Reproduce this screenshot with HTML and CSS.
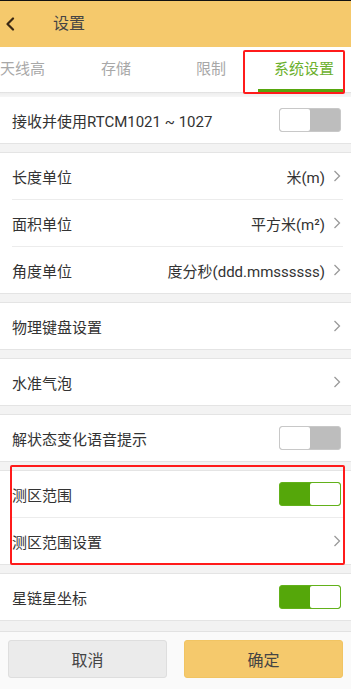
FILE: index.html
```html
<!DOCTYPE html>
<html lang="zh">
<head>
<meta charset="utf-8">
<link rel="stylesheet" href="styles.css">
</head>
<body>
<div class="page">
  <div class="topline"></div>
  <header class="header">
    <svg class="back" width="10" height="14" viewBox="0 0 10 14"><path d="M8 1.5 L2.5 7 L8 12.5" fill="none" stroke="#3a2814" stroke-width="2.2" stroke-linecap="round" stroke-linejoin="round"/></svg>
    <span class="title">设置</span>
  </header>
  <nav class="tabs">
    <span class="tab t1">天线高</span>
    <span class="tab t2">存储</span>
    <span class="tab t3">限制</span>
    <span class="tab t4 active">系统设置</span>
  </nav>
  <div class="shade"></div>
  <main class="content">
    <section class="group first">
      <div class="row"><span class="label">接收并使用RTCM1021 ~ 1027</span><span class="switch off"><i></i></span></div>
    </section>
    <div class="gap"></div>
    <section class="group">
      <div class="row"><span class="label">长度单位</span><span class="value">米(m)</span><svg class="chev" width="8" height="12" viewBox="0 0 8 12"><path d="M1.5 1 L6.5 6 L1.5 11" fill="none" stroke="#9a9a9a" stroke-width="1.3"/></svg></div>
      <div class="divider"></div>
      <div class="row"><span class="label">面积单位</span><span class="value">平方米(m²)</span><svg class="chev" width="8" height="12" viewBox="0 0 8 12"><path d="M1.5 1 L6.5 6 L1.5 11" fill="none" stroke="#9a9a9a" stroke-width="1.3"/></svg></div>
      <div class="divider"></div>
      <div class="row"><span class="label">角度单位</span><span class="value">度分秒(ddd.mmssssss)</span><svg class="chev" width="8" height="12" viewBox="0 0 8 12"><path d="M1.5 1 L6.5 6 L1.5 11" fill="none" stroke="#9a9a9a" stroke-width="1.3"/></svg></div>
    </section>
    <div class="gap"></div>
    <section class="group">
      <div class="row"><span class="label">物理键盘设置</span><svg class="chev" width="8" height="12" viewBox="0 0 8 12"><path d="M1.5 1 L6.5 6 L1.5 11" fill="none" stroke="#9a9a9a" stroke-width="1.3"/></svg></div>
    </section>
    <div class="gap"></div>
    <section class="group">
      <div class="row"><span class="label">水准气泡</span><svg class="chev" width="8" height="12" viewBox="0 0 8 12"><path d="M1.5 1 L6.5 6 L1.5 11" fill="none" stroke="#9a9a9a" stroke-width="1.3"/></svg></div>
    </section>
    <div class="gap"></div>
    <section class="group">
      <div class="row"><span class="label">解状态变化语音提示</span><span class="switch off"><i></i></span></div>
    </section>
    <div class="gap"></div>
    <section class="group">
      <div class="row"><span class="label">测区范围</span><span class="switch on"><i></i></span></div>
      <div class="divider"></div>
      <div class="row"><span class="label">测区范围设置</span><svg class="chev" width="8" height="12" viewBox="0 0 8 12"><path d="M1.5 1 L6.5 6 L1.5 11" fill="none" stroke="#9a9a9a" stroke-width="1.3"/></svg></div>
    </section>
    <div class="gap"></div>
    <section class="group">
      <div class="row"><span class="label">星链星坐标</span><span class="switch on"><i></i></span></div>
    </section>
    <div class="band"></div>
  </main>
  <footer class="footer">
    <button class="btn cancel">取消</button>
    <button class="btn ok">确定</button>
  </footer>
  <div class="mark mark-tab"></div>
  <div class="mark mark-area"></div>
</div>
</body>
</html>
```
FILE: styles.css
```css
* { box-sizing: border-box; }
html, body { margin: 0; padding: 0; }
body {
  font-family: Roboto, "Noto Sans CJK SC", sans-serif;
  color: #333;
  background: #fff;
}
.page {
  position: relative;
  width: 351px;
  height: 689px;
  overflow: hidden;
  display: flex;
  flex-direction: column;
}
.topline { height: 1px; background: #111; }
.header {
  height: 46px;
  background: #f5c96c;
  display: flex;
  align-items: center;
  padding-left: 5px;
}
.back { display: block; }
.title {
  margin-left: 38px;
  font-size: 16px;
  color: #444;
  line-height: 1;
}
.tabs {
  height: 45px;
  display: flex;
  align-items: center;
  background: #fff;
  font-size: 15px;
  color: #a8a8a8;
  white-space: nowrap;
}
.tab { line-height: 1; }
.t1 { margin-left: 0; }
.t2 { margin-left: 56px; }
.t3 { margin-left: 65px; }
.t4 { margin-left: 48px; }
.tab.active {
  position: relative;
  color: #6bb02d;
}
.tab.active::after {
  content: "";
  position: absolute;
  left: -16px;
  width: 85px;
  top: 27px;
  height: 4px;
  background: #56a60c;
}
.shade {
  height: 5px;
  background: linear-gradient(#dcdcdc, #efefef 30%, #f6f6f6);
}
.content { display: flex; flex-direction: column; }
.group {
  background: #fff;
  border-top: 1px solid #e4e4e4;
  border-bottom: 1px solid #e4e4e4;
}
.group.first { border-top: 0; }
.gap { height: 8px; background: #f3f3f3; }
.row {
  height: 46px;
  display: flex;
  align-items: center;
  padding: 0 10px 0 12px;
  font-size: 15px;
}
.label { flex: 1; color: #333; white-space: nowrap; }
.value { color: #333; margin-right: 8px; white-space: nowrap; }
.chev { display: block; flex: none; }
.divider { height: 1px; background: #ececec; margin: 0 8px 0 12px; }
.switch {
  width: 62px;
  height: 24px;
  border-radius: 3px;
  display: flex;
  position: relative;
  overflow: hidden;
}
.switch.off {
  background: #bdbdbd;
  border: 1px solid #c8c8c8;
}
.switch.off i {
  width: 30px;
  height: 100%;
  background: #fff;
  border-radius: 2px;
}
.switch.on {
  background: #55a70a;
  border: 1px solid #62b11a;
  justify-content: flex-end;
}
.switch.on i {
  width: 30px;
  height: 100%;
  background: #fff;
  border-radius: 2px;
}
.band {
  height: 10px;
  background: #f2f2f2;
}
.footer {
  flex: 1;
  border-top: 1px solid #e2e2e2;
  background: #fafafa;
  display: flex;
  gap: 17px;
  padding: 8px 8px 0 8px;
}
.btn {
  width: 159px;
  height: 38px;
  border-radius: 3px;
  font-family: Roboto, "Noto Sans CJK SC", sans-serif;
  font-size: 16px;
  color: #444;
  padding: 0;
}
.cancel { background: #ebebeb; border: 1px solid #dedede; }
.ok { background: #f5c96c; border: 1px solid #f1c462; }
.mark {
  position: absolute;
  border: 2px solid #ff1b1b;
  border-radius: 2px;
  pointer-events: none;
}
.mark-tab { left: 243px; top: 50px; width: 102px; height: 44px; }
.mark-area { left: 10px; top: 465px; width: 335px; height: 100px; }
```
